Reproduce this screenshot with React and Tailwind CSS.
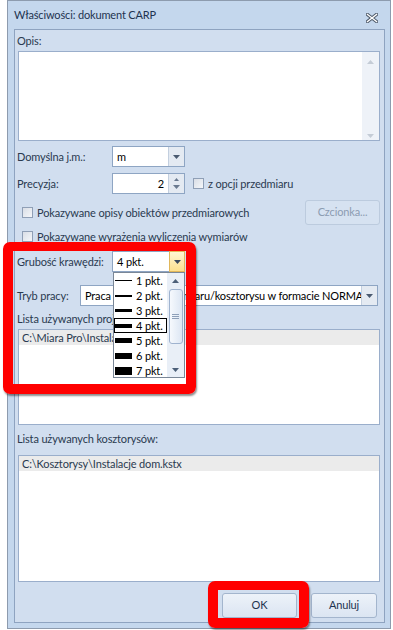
import React from "react";

function Arrow({ color = "#4a5a70" }) {
  return (
    <svg width="7" height="4" viewBox="0 0 7 4">
      <path d="M0 0H7L3.5 4Z" fill={color} />
    </svg>
  );
}

function UpArrow({ color = "#4a5a70", w = 7, h = 4 }) {
  return (
    <svg width={w} height={h} viewBox="0 0 7 4">
      <path d="M0 4H7L3.5 0Z" fill={color} />
    </svg>
  );
}

function Combo({ width, text, highlight }) {
  return (
    <div className={`flex h-[21px] border border-[#8ea5c3] bg-white ${width}`}>
      <div className="flex-1 pl-[4px] leading-[19px] text-black whitespace-nowrap overflow-hidden">{text}</div>
      {highlight ? (
        <div className="w-[16px] flex items-center justify-center border border-[#e1b75a] bg-gradient-to-b from-[#fff6d2] to-[#fde08e] -my-px -mr-px">
          <Arrow color="#3b4a5e" />
        </div>
      ) : (
        <div className="w-[16px] flex items-center justify-center border-l border-[#c3cfdf] bg-[#e4eaf2]">
          <Arrow />
        </div>
      )}
    </div>
  );
}

function Check() {
  return (
    <div className="w-[11px] h-[11px] border border-[#8f9fb6] bg-gradient-to-br from-[#d9dee6] to-[#f5f7fa] shrink-0" />
  );
}

const items = [1, 2, 3, 4, 5, 6, 7];

export default function App() {
  return (
    <div className="relative w-[393px] h-[630px] bg-white overflow-hidden font-['Lato','Open_Sans',sans-serif] text-[11px] tracking-[-0.15px] text-[#2a3a50] whitespace-nowrap">
      {/* Window */}
      <div className="ml-[7px] w-[384px] h-[629px] border border-[#8d9bae] bg-[#c4d7ed] flex flex-col">
        {/* Title */}
        <div className="h-[28px] flex items-start justify-between pt-[6px] pl-[6px] pr-[12px]">
          <span className="leading-[16px] text-[#1e3350]">Właściwości: dokument CARP</span>
          <svg width="12" height="10" viewBox="0 0 12 10" className="mt-[6px]">
            <path d="M1.5 1.5L10.5 8.5M10.5 1.5L1.5 8.5" stroke="#4f5b6b" strokeWidth="3.4" strokeLinecap="square" />
            <path d="M1.5 1.5L10.5 8.5M10.5 1.5L1.5 8.5" stroke="#ffffff" strokeWidth="1.4" strokeLinecap="square" />
          </svg>
        </div>
        {/* Panel */}
        <div className="ml-[6px] mr-[5px] h-[594px] border border-[#8ea3c0] bg-[#d1deef] flex flex-col">
          <div className="ml-[2px] mt-[3px] h-[16px] leading-[16px]">Opis:</div>
          <div className="ml-[3px] mt-[2px] w-[362px] h-[90px] border border-[#9aaecb] bg-white flex justify-end">
            <div className="w-[17px] h-full bg-[#eef2f8] flex flex-col justify-between items-center pt-[8px] pb-[2px]">
              <UpArrow color="#c4ccd6" />
              <Arrow color="#c4ccd6" />
            </div>
          </div>

          {/* Domyślna */}
          <div className="mt-[5px] h-[21px] flex items-center">
            <div className="ml-[2px] w-[95px] leading-[16px]">Domyślna j.m.:</div>
            <Combo width="w-[73px]" text="m" />
          </div>

          {/* Precyzja */}
          <div className="mt-[6px] h-[21px] flex items-center">
            <div className="ml-[2px] w-[95px] leading-[16px]">Precyzja:</div>
            <div className="flex h-[21px] w-[73px] border border-[#8ea5c3] bg-white">
              <div className="flex-1 pr-[4px] text-right leading-[19px] text-black">2</div>
              <div className="w-[16px] flex flex-col items-center justify-center gap-[4px] border-l border-[#c3cfdf] bg-[#e4eaf2]">
                <UpArrow w={5} h={3} color="#6a7a90" />
                <Arrow color="#6a7a90" />
              </div>
            </div>
            <div className="ml-[8px] flex items-center gap-[4px]">
              <Check />
              <span className="leading-[16px]">z opcji przedmiaru</span>
            </div>
          </div>

          {/* Checkbox row 1 */}
          <div className="mt-[6px] h-[25px] flex items-center">
            <div className="ml-[7px] flex items-center gap-[4px]">
              <Check />
              <span className="leading-[16px]">Pokazywane opisy obiektów przedmiarowych</span>
            </div>
            <div className="ml-auto mr-[4px] w-[75px] h-[25px] rounded-[3px] border border-[#bccbde] bg-[#d6e2f1] text-[#8c9cb1] flex items-center justify-center">
              Czcionka...
            </div>
          </div>

          {/* Checkbox row 2 */}
          <div className="mt-[3px] h-[17px] flex items-center">
            <div className="ml-[7px] flex items-center gap-[4px]">
              <Check />
              <span className="leading-[16px]">Pokazywane wyrażenia wyliczenia wymiarów</span>
            </div>
          </div>

          {/* Grubość */}
          <div className="mt-[6px] h-[21px] flex items-center">
            <div className="ml-[2px] w-[95px] leading-[16px]">Grubość krawędzi:</div>
            <Combo width="w-[73px]" text="4 pkt." highlight />
          </div>

          {/* Tryb */}
          <div className="mt-[13px] h-[21px] flex items-center">
            <div className="ml-[2px] w-[63px] leading-[16px]">Tryb pracy:</div>
            <Combo width="w-[298px]" text="Praca z plikiem przedmiaru/kosztorysu w formacie NORMA" />
          </div>

          <div className="ml-[2px] mt-[5px] h-[16px] leading-[16px]">Lista używanych projektów:</div>
          <div className="ml-[3px] mt-[2px] w-[362px] h-[96px] border border-[#9aaecb] bg-white">
            <div className="h-[15px] bg-[#ebebeb] pl-[3px] leading-[15px]">C:\Miara Pro\Instalacje dom.prx</div>
          </div>

          <div className="ml-[2px] mt-[6px] h-[16px] leading-[16px]">Lista używanych kosztorysów:</div>
          <div className="ml-[3px] mt-[8px] w-[362px] h-[127px] border border-[#9aaecb] bg-white">
            <div className="h-[15px] bg-[#ebebeb] pl-[3px] leading-[15px]">C:\Kosztorysy\Instalacje dom.kstx</div>
          </div>

          {/* Buttons */}
          <div className="mt-[11px] h-[25px] flex justify-end gap-[14px] mr-[7px]">
            <div className="w-[75px] h-[25px] rounded-[3px] border border-[#a3b5cd] bg-gradient-to-b from-[#edf2f9] to-[#dbe5f2] flex items-center justify-center text-[#1e3350]">OK</div>
            <div className="w-[66px] h-[25px] rounded-[3px] border border-[#a3b5cd] bg-gradient-to-b from-[#edf2f9] to-[#dbe5f2] flex items-center justify-center text-[#1e3350]">Anuluj</div>
          </div>
        </div>
      </div>

      {/* Dropdown list overlay */}
      <div className="absolute left-[113px] top-[272px] w-[72px] h-[106px] border border-[#7a8797] bg-white flex">
        <div className="w-[53px] flex flex-col">
          {items.map((n) => (
            <div
              key={n}
              className={`h-[15px] flex items-center gap-[4px] pl-[1px] text-black ${n === 4 ? "outline outline-1 outline-black -outline-offset-1" : ""}`}
            >
              <div className="w-[17px] shrink-0 bg-black" style={{ height: n === 7 ? 8 : n }} />
              <span className="leading-[15px]">{n} pkt.</span>
            </div>
          ))}
        </div>
        <div className="w-[17px] bg-[#e9eff7] flex flex-col items-center">
          <div className="h-[16px] flex items-center justify-center"><UpArrow color="#4c5f78" /></div>
          <div className="w-[14px] h-[55px] rounded-[3px] border border-[#9fb3cf] bg-gradient-to-r from-[#f6f9fd] to-[#dce6f3] flex flex-col items-center justify-center gap-[1px]">
            <div className="w-[7px] h-px bg-[#8d9fb8]" />
            <div className="w-[7px] h-px bg-[#8d9fb8]" />
            <div className="w-[7px] h-px bg-[#8d9fb8]" />
          </div>
          <div className="flex-1 flex items-end justify-center pb-[5px]"><Arrow color="#4c5f78" /></div>
        </div>
      </div>

      {/* Red annotation boxes */}
      <div className="absolute left-[3px] top-[242px] w-[193px] h-[152px] border-[10px] border-t-[9px] border-[#ff0000] rounded-[7px] shadow-[1px_2px_2px_rgba(0,0,0,0.45)]" />
      <div className="absolute left-[208px] top-[581px] w-[101px] h-[47px] border-[10px] border-t-[9px] border-[#ff0000] rounded-[7px] shadow-[1px_2px_2px_rgba(0,0,0,0.45)]" />
    </div>
  );
}
